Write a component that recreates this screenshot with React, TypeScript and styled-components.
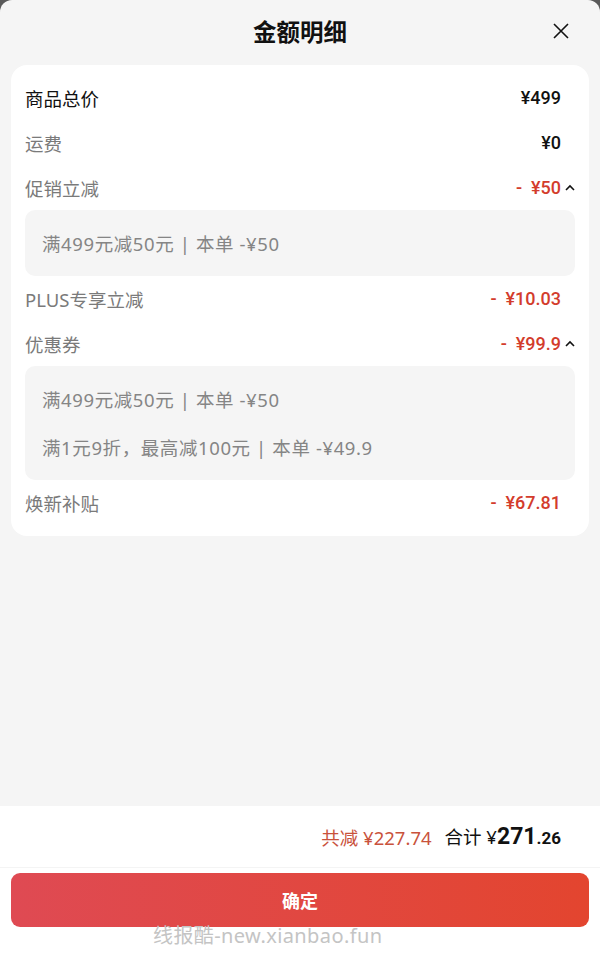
import styled, { createGlobalStyle } from 'styled-components';

const GlobalStyle = createGlobalStyle`
  html, body {
    margin: 0;
    padding: 0;
    background: #5a5a5a;
  }
  body {
    font-family: 'Noto Sans', 'Noto Sans CJK SC', sans-serif;
  }
`;

const Page = styled.div`
  width: 600px;
  height: 974px;
  display: flex;
  flex-direction: column;
  position: relative;
  overflow: hidden;
`;

const Sheet = styled.div`
  flex: 1;
  background: #f5f5f5;
  border-radius: 12px 12px 0 0;
  display: flex;
  flex-direction: column;
`;

const Header = styled.div`
  height: 62px;
  display: flex;
  align-items: center;
  justify-content: center;
  position: relative;
`;

const Title = styled.div`
  font-size: 23.5px;
  font-weight: 600;
  color: #111;
  font-family: 'Noto Sans CJK SC', sans-serif;
`;

const CloseBtn = styled.button`
  position: absolute;
  right: 30px;
  top: 22px;
  width: 18px;
  height: 18px;
  padding: 0;
  border: none;
  background: none;
  display: flex;
`;

const Card = styled.div`
  margin: 3px 11px 0;
  background: #fff;
  border-radius: 16px;
  padding: 10px 14px 11px;
  display: flex;
  flex-direction: column;
`;

const Row = styled.div`
  height: 45px;
  display: flex;
  align-items: center;
`;

const Label = styled.div<{ $strong?: boolean }>`
  flex: 1;
  font-size: 18.5px;
  color: ${(p) => (p.$strong ? '#111' : '#7a7a7a')};
  font-family: 'Noto Sans', 'Noto Sans CJK SC', sans-serif;
`;

const Value = styled.div<{ $red?: boolean }>`
  font-size: 18px;
  font-weight: 500;
  color: ${(p) => (p.$red ? '#d33c2c' : '#111')};
  font-family: 'Roboto', 'Noto Sans CJK SC', sans-serif;
  white-space: pre;
`;

const Chevron = styled.div`
  width: 14px;
  display: flex;
  justify-content: flex-end;
  align-items: center;
`;

const Detail = styled.div`
  background: #f5f5f5;
  border-radius: 10px;
  padding: 9px 17px;
  display: flex;
  flex-direction: column;
`;

const DetailLine = styled.div`
  height: 48px;
  display: flex;
  align-items: center;
  font-size: 18.5px;
  letter-spacing: 0.6px;
  color: #858585;
  font-family: 'Noto Sans', 'Noto Sans CJK SC', sans-serif;
  white-space: pre;
`;

const Footer = styled.div`
  height: 168px;
  background: #fff;
  display: flex;
  flex-direction: column;
`;

const TotalRow = styled.div`
  height: 61px;
  border-bottom: 1px solid #f4f4f4;
  display: flex;
  align-items: center;
  justify-content: flex-end;
  padding-right: 39px;
  gap: 13px;
  font-family: 'Noto Sans', 'Noto Sans CJK SC', sans-serif;
`;

const Saved = styled.div`
  font-size: 18.5px;
  color: #c9523c;
`;

const Sum = styled.div`
  font-size: 18.5px;
  color: #111;
  display: flex;
  align-items: baseline;
`;

const SumBig = styled.span<{ $size: number }>`
  font-size: ${(p) => p.$size}px;
  font-weight: 700;
  font-family: 'Roboto', sans-serif;
`;

const ConfirmButton = styled.button`
  margin: 5px 11px 0;
  height: 54px;
  border: none;
  border-radius: 9px;
  background: linear-gradient(90deg, #df4a53 0%, #e3452f 100%);
  color: #fff;
  font-size: 18px;
  font-weight: 700;
  font-family: 'Noto Sans CJK SC', sans-serif;
`;

const Watermark = styled.div`
  position: absolute;
  left: 153px;
  top: 920px;
  font-size: 20px;
  letter-spacing: 0.4px;
  color: #c4c4c4;
  font-family: 'Noto Sans', 'Noto Sans CJK SC', sans-serif;
`;

const Up = () => (
  <svg width="10" height="7" viewBox="0 0 10 7">
    <path d="M1 6 L5 2 L9 6" fill="none" stroke="#111" strokeWidth="1.6" />
  </svg>
);

type Item = {
  label: string;
  value: string;
  strong?: boolean;
  red?: boolean;
  details?: string[];
};

const items: Item[] = [
  { label: '商品总价', value: '¥499', strong: true },
  { label: '运费', value: '¥0' },
  { label: '促销立减', value: '-  ¥50', red: true, details: ['满499元减50元 | 本单 -¥50'] },
  { label: 'PLUS专享立减', value: '-  ¥10.03', red: true },
  {
    label: '优惠券',
    value: '-  ¥99.9',
    red: true,
    details: ['满499元减50元 | 本单 -¥50', '满1元9折，最高减100元 | 本单 -¥49.9'],
  },
  { label: '焕新补贴', value: '-  ¥67.81', red: true },
];

export default function App() {
  return (
    <Page>
      <GlobalStyle />
      <Sheet>
        <Header>
          <Title>金额明细</Title>
          <CloseBtn>
            <svg width="18" height="18" viewBox="0 0 18 18">
              <path d="M2 2 L16 16 M16 2 L2 16" stroke="#111" strokeWidth="1.6" />
            </svg>
          </CloseBtn>
        </Header>
        <Card>
          {items.map((it) => (
            <div key={it.label}>
              <Row>
                <Label $strong={it.strong}>{it.label}</Label>
                <Value $red={it.red}>{it.value}</Value>
                <Chevron>{it.details && <Up />}</Chevron>
              </Row>
              {it.details && (
                <Detail>
                  {it.details.map((d) => (
                    <DetailLine key={d}>{d}</DetailLine>
                  ))}
                </Detail>
              )}
            </div>
          ))}
        </Card>
      </Sheet>
      <Footer>
        <TotalRow>
          <Saved>共减 ¥227.74</Saved>
          <Sum>
            合计 ¥<SumBig $size={23}>271</SumBig>
            <SumBig $size={17}>.26</SumBig>
          </Sum>
        </TotalRow>
        <ConfirmButton>确定</ConfirmButton>
      </Footer>
      <Watermark>线报酷-new.xianbao.fun</Watermark>
    </Page>
  );
}
